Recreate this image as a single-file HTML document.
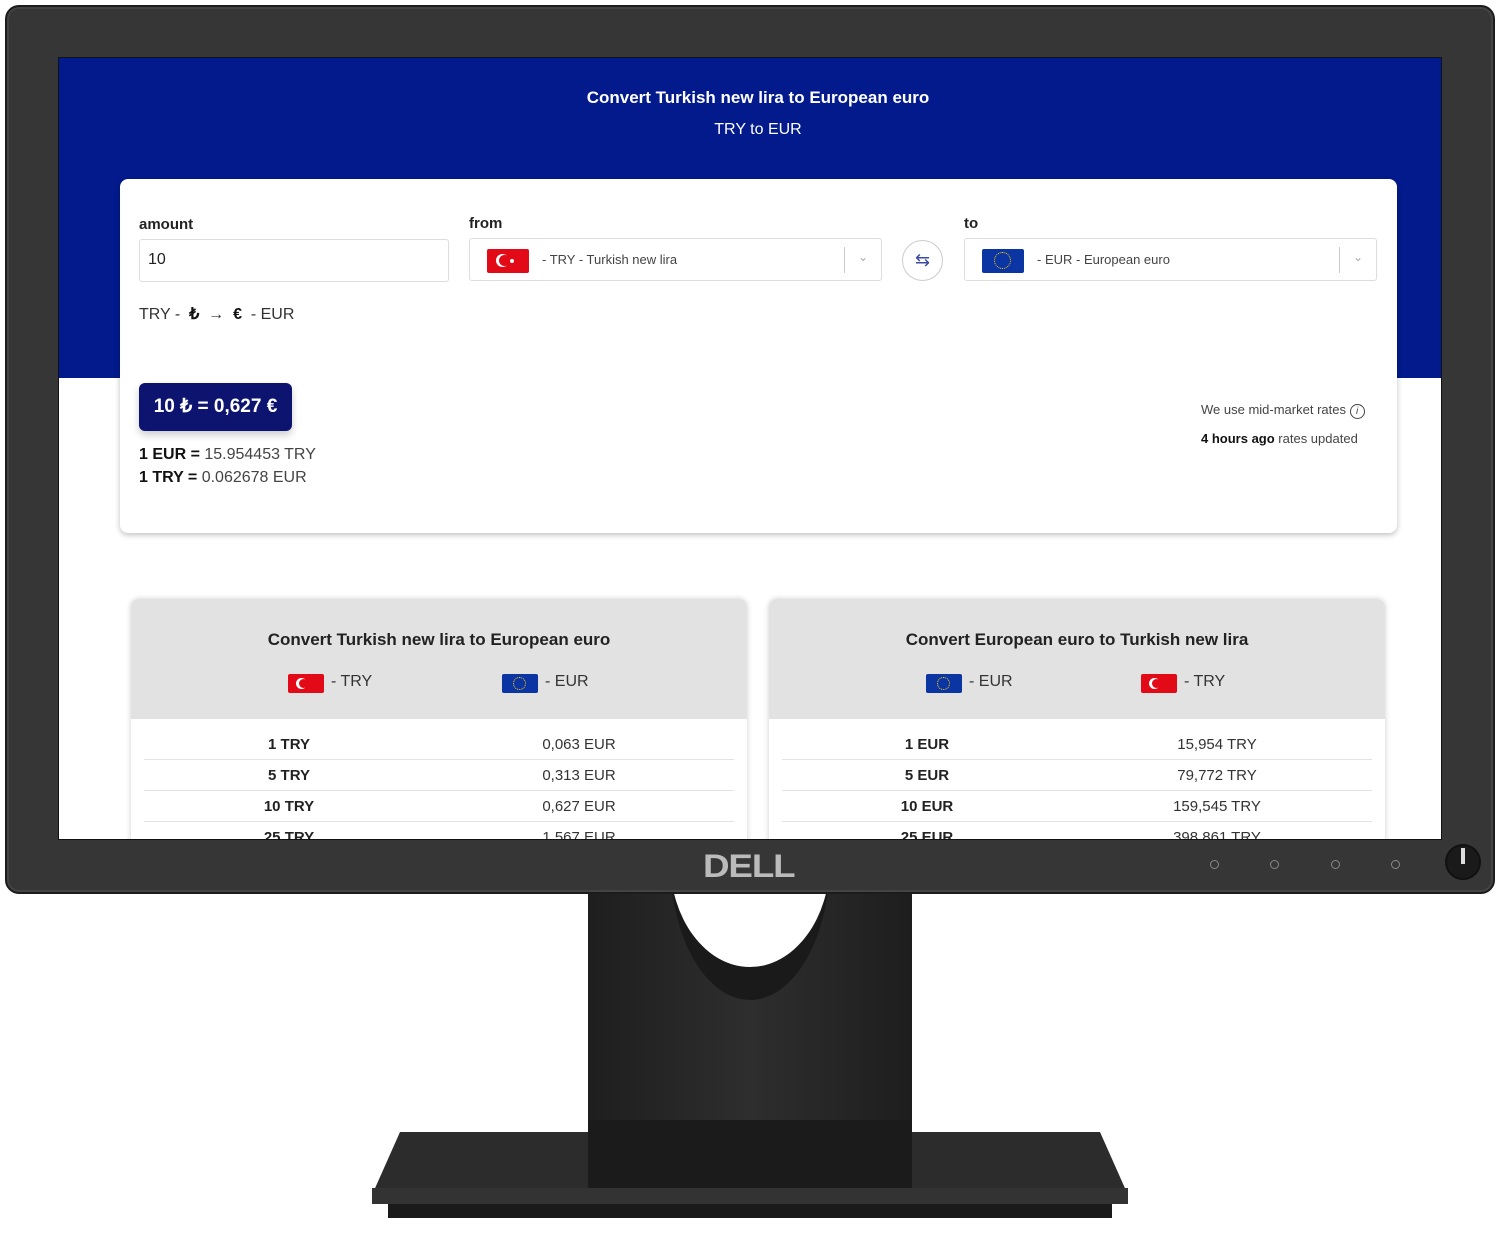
<!DOCTYPE html>
<html><head><meta charset="utf-8"><style>
*{margin:0;padding:0;box-sizing:border-box}
body{width:1500px;height:1258px;background:#fff;position:relative;overflow:hidden;font-family:"Liberation Sans",sans-serif;color:#222}
.a{position:absolute}
.bezel{left:5px;top:5px;width:1490px;height:889px;background:#363636;border-radius:14px;border:2px solid #1c1c1c;box-shadow:inset 0 0 0 2px #444}
.screen{left:58px;top:57px;width:1384px;height:783px;background:#fff;overflow:hidden;border:1px solid #111}
.blue{left:0;top:0;width:1384px;height:320px;background:#021a8c}
.card{left:61px;top:121px;width:1277px;height:354px;background:#fff;border-radius:8px;box-shadow:0 2px 6px rgba(0,0,0,.25)}
.lbl{font-size:15px;font-weight:bold;color:#222}
.inp{border:1px solid #ddd;border-radius:3px;background:#fff;height:43px}
.flag{width:42px;height:24px;border-radius:2px;position:absolute}
.tr{background:#e30a17}
.eu{background:#0b35a3}
.panel{width:616px;height:260px;background:#fff;border-radius:8px;box-shadow:0 0 6px rgba(0,0,0,.2);overflow:hidden}
.ph{height:120px;background:#e2e2e2;text-align:center}
.row{position:absolute;left:13px;width:590px;height:31px;border-bottom:1px solid #e3e3e3;font-size:15px}
.row b{position:absolute;left:0;width:290px;text-align:center;top:7px}
.row span{position:absolute;left:290px;width:290px;text-align:center;top:7px;color:#333}
.btn{width:9px;height:9px;border:1.5px solid #888;border-radius:50%}
</style></head><body>
<div class="a" style="left:588px;top:890px;width:324px;height:260px;background:linear-gradient(90deg,#1e1e1e,#2e2e2e 50%,#1e1e1e);"></div>
<div class="a" style="left:670px;top:860px;width:160px;height:140px;border-radius:0 0 80px 80px/0 0 140px 140px;background:#1a1a1a"></div>
<div class="a" style="left:670px;top:860px;width:160px;height:107px;border-radius:0 0 80px 80px/0 0 107px 107px;background:#fff"></div>
<svg class="a" style="left:0;top:0" width="1500" height="1258">
<polygon points="400,1132 1100,1132 1128,1195 372,1195" fill="#2c2c2c"/>
<rect x="588" y="1120" width="324" height="68" fill="#1b1b1b"/>
<rect x="372" y="1188" width="756" height="16" fill="#333"/>
<rect x="388" y="1204" width="724" height="14" fill="#1a1a1a"/>
</svg>
<div class="a bezel"></div>
<div class="a" style="left:703px;top:848px;font:bold 32px 'Liberation Sans',sans-serif;color:#bbb;letter-spacing:-1px;transform:scaleX(1.15);transform-origin:left">DELL</div>
<div class="a btn" style="left:1210px;top:860px"></div>
<div class="a btn" style="left:1270px;top:860px"></div>
<div class="a btn" style="left:1331px;top:860px"></div>
<div class="a btn" style="left:1391px;top:860px"></div>
<div class="a" style="left:1445px;top:844px;width:36px;height:36px;border-radius:50%;background:#1a1a1a;border:2px solid #111"></div>
<div class="a" style="left:1461px;top:848px;width:4px;height:16px;background:#ddd"></div>

<div class="a screen">
 <div class="a blue"></div>
 <div class="a" style="left:0;top:30px;width:1398px;text-align:center;color:#fff;font-size:17px;font-weight:bold">Convert Turkish new lira to European euro</div>
 <div class="a" style="left:0;top:63px;width:1398px;text-align:center;color:#fff;font-size:16px">TRY to EUR</div>
 <div class="a card">
  <div class="a lbl" style="left:19px;top:37px">amount</div>
  <div class="a lbl" style="left:349px;top:36px">from</div>
  <div class="a lbl" style="left:844px;top:36px">to</div>
  <div class="a inp" style="left:19px;top:60px;width:310px;font-size:16px;padding:11px 8px">10</div>
  <div class="a inp" style="left:349px;top:59px;width:413px">
   <div class="flag tr" style="left:17px;top:10px"><div class="a" style="left:9px;top:5px;width:13px;height:13px;border-radius:50%;background:#fff"></div><div class="a" style="left:12px;top:6px;width:11px;height:11px;border-radius:50%;background:#e30a17"></div><div class="a" style="left:23px;top:10px;width:4px;height:4px;background:#fff;border-radius:50%"></div></div>
   <div class="a" style="left:72px;top:13px;font-size:13px;color:#444">- TRY - Turkish new lira</div>
   <div class="a" style="left:374px;top:8px;width:1px;height:26px;background:#ccc"></div>
   <div class="a" style="left:388px;top:11px;font-size:12px;color:#aaa">&#8964;</div>
  </div>
  <div class="a" style="left:782px;top:61px;width:41px;height:41px;border-radius:50%;border:1px solid #ccc;text-align:center;line-height:38px;color:#3a4aa0;font-size:18px">&#8646;</div>
  <div class="a inp" style="left:844px;top:59px;width:413px">
   <div class="flag eu" style="left:17px;top:10px"><div class="a" style="left:12px;top:3px;width:17px;height:17px;border-radius:50%;border:1px dotted #ffcc00"></div></div>
   <div class="a" style="left:72px;top:13px;font-size:13px;color:#444">- EUR - European euro</div>
   <div class="a" style="left:374px;top:8px;width:1px;height:26px;background:#ccc"></div>
   <div class="a" style="left:388px;top:11px;font-size:12px;color:#aaa">&#8964;</div>
  </div>
  <div class="a" style="left:19px;top:125px;font-size:16px;color:#333">TRY - &nbsp;<b style="color:#111">₺</b> &nbsp;→ &nbsp;<b style="color:#111">€</b> &nbsp;- EUR</div>
  <div class="a" style="left:19px;top:204px;width:153px;height:48px;background:#0c1470;border-radius:6px;color:#fff;font-size:19px;font-weight:bold;line-height:48px;text-align:center;box-shadow:0 4px 8px rgba(0,0,0,.2)">10 ₺ = 0,627 €</div>
  <div class="a" style="left:19px;top:267px;font-size:16px;color:#444"><b style="color:#111">1 EUR =</b> 15.954453 TRY</div>
  <div class="a" style="left:19px;top:290px;font-size:16px;color:#444"><b style="color:#111">1 TRY =</b> 0.062678 EUR</div>
  <div class="a" style="left:1081px;top:223px;font-size:13px;color:#444">We use mid-market rates <span style="display:inline-block;width:15px;height:15px;border:1px solid #444;border-radius:50%;font-size:10px;text-align:center;line-height:13px;font-style:italic">i</span></div>
  <div class="a" style="left:1081px;top:252px;font-size:13px;color:#444"><b style="color:#111">4 hours ago</b> rates updated</div>
 </div>
 <div class="a panel" style="left:72px;top:541px">
  <div class="ph"></div>
  <div class="a" style="left:0;top:31px;width:616px;text-align:center;font-size:17px;font-weight:bold;color:#222">Convert Turkish new lira to European euro</div>
  <div class="flag tr" style="left:157px;top:75px;width:36px;height:19px"><div class="a" style="left:8px;top:4px;width:11px;height:11px;border-radius:50%;background:#fff"></div><div class="a" style="left:11px;top:5px;width:9px;height:9px;border-radius:50%;background:#e30a17"></div></div>
  <div class="a" style="left:200px;top:74px;font-size:16px;color:#333">- TRY</div>
  <div class="flag eu" style="left:371px;top:75px;width:36px;height:19px"><div class="a" style="left:11px;top:3px;width:13px;height:13px;border-radius:50%;border:1px dotted #ffcc00"></div></div>
  <div class="a" style="left:414px;top:74px;font-size:16px;color:#333">- EUR</div>
  <div class="row" style="top:130px"><b>1 TRY</b><span>0,063 EUR</span></div>
  <div class="row" style="top:161px"><b>5 TRY</b><span>0,313 EUR</span></div>
  <div class="row" style="top:192px"><b>10 TRY</b><span>0,627 EUR</span></div>
  <div class="row" style="top:223px"><b>25 TRY</b><span>1,567 EUR</span></div>
 </div>
 <div class="a panel" style="left:710px;top:541px">
  <div class="ph"></div>
  <div class="a" style="left:0;top:31px;width:616px;text-align:center;font-size:17px;font-weight:bold;color:#222">Convert European euro to Turkish new lira</div>
  <div class="flag eu" style="left:157px;top:75px;width:36px;height:19px"><div class="a" style="left:11px;top:3px;width:13px;height:13px;border-radius:50%;border:1px dotted #ffcc00"></div></div>
  <div class="a" style="left:200px;top:74px;font-size:16px;color:#333">- EUR</div>
  <div class="flag tr" style="left:372px;top:75px;width:36px;height:19px"><div class="a" style="left:8px;top:4px;width:11px;height:11px;border-radius:50%;background:#fff"></div><div class="a" style="left:11px;top:5px;width:9px;height:9px;border-radius:50%;background:#e30a17"></div></div>
  <div class="a" style="left:415px;top:74px;font-size:16px;color:#333">- TRY</div>
  <div class="row" style="top:130px"><b>1 EUR</b><span>15,954 TRY</span></div>
  <div class="row" style="top:161px"><b>5 EUR</b><span>79,772 TRY</span></div>
  <div class="row" style="top:192px"><b>10 EUR</b><span>159,545 TRY</span></div>
  <div class="row" style="top:223px"><b>25 EUR</b><span>398,861 TRY</span></div>
 </div>
</div>
</body></html>
